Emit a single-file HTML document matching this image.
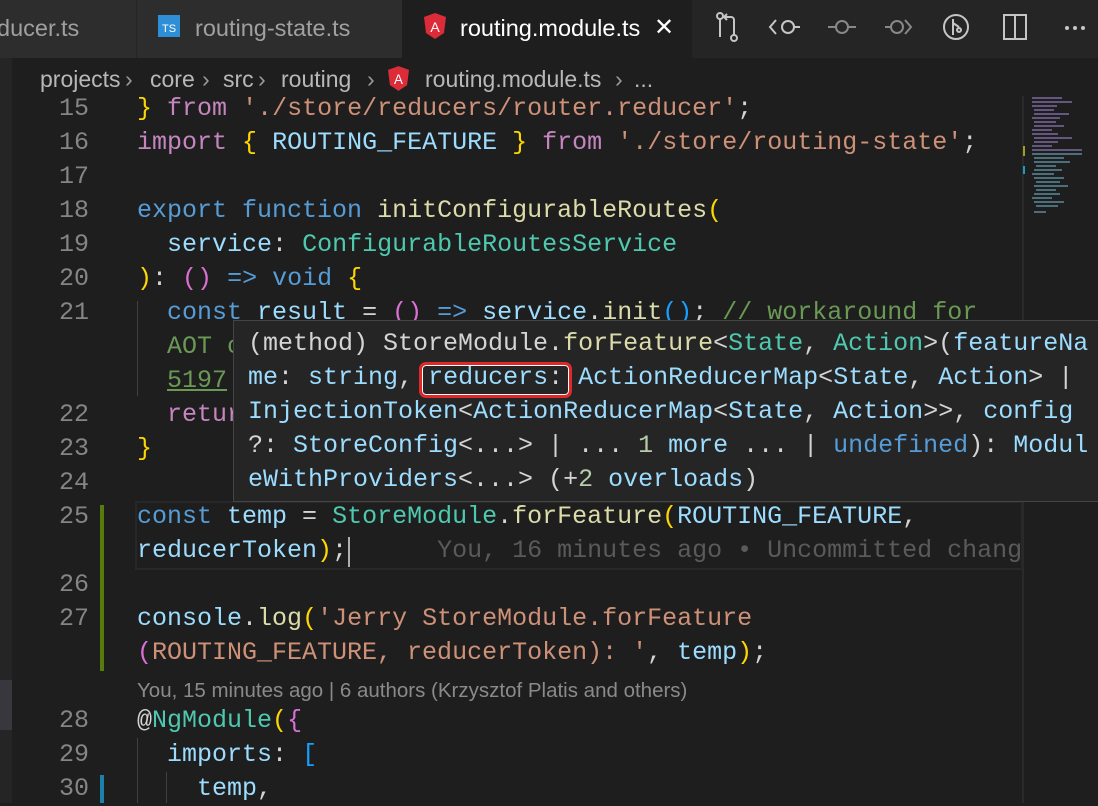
<!DOCTYPE html>
<html><head><meta charset="utf-8"><style>
*{margin:0;padding:0;box-sizing:border-box}
body{width:1098px;height:803px;overflow:hidden;background:#1e1e1e;position:relative;font-family:"Liberation Sans",sans-serif}
.abs{position:absolute}
.tabs{left:0;top:0;width:1098px;height:58px;background:#252526}
.tab{position:absolute;top:0;height:58px;color:#a0a0a0;font-size:23.5px;line-height:56px;white-space:nowrap;overflow:hidden}
.cr{position:absolute;top:62px;font-size:23px;color:#b8b8b8;line-height:34px;white-space:nowrap}
.sep{position:absolute;top:62px;font-size:23px;color:#999;line-height:34px}
.code{font-family:"Liberation Mono",monospace;font-size:25px;line-height:34px;white-space:pre;color:#d4d4d4;position:absolute}
.ln{position:absolute;left:20px;width:69px;text-align:right;font-family:"Liberation Mono",monospace;font-size:25px;line-height:34px;color:#858585}
.k{color:#569cd6}.c{color:#c586c0}.f{color:#dcdcaa}.t{color:#4ec9b0}.v{color:#9cdcfe}.s{color:#ce9178}.g{color:#6a9955}.n{color:#b5cea8}
.y{color:#ffd700}.p{color:#da70d6}.b{color:#179fff}.w{color:#d4d4d4}
</style></head><body>
<div class="abs" style="left:0;top:58px;width:12px;height:745px;background:#252526"></div>
<div class="abs" style="left:0;top:680px;width:12px;height:50px;background:#37373d"></div>
<div class="abs tabs">
 <div class="tab" style="left:0;width:136px;background:#2d2d2d"><span style="margin-left:-3px">ducer.ts</span></div>
 <div class="tab" style="left:137px;width:265px;background:#2d2d2d">
  <span class="abs" style="left:21px;top:15px;width:22px;height:22px;background:#2f8fd6;color:#fff;font-size:11px;line-height:28px;text-align:center">TS</span>
  <span class="abs" style="left:58px;top:0">routing-state.ts</span></div>
 <div class="tab" style="left:402px;width:290px;background:#1e1e1e;color:#fff">
  <svg class="abs" style="left:22px;top:13px" width="22" height="26" viewBox="0 0 22 26"><path d="M11 0L22 4 20 20 11 26 2 20 0 4Z" fill="#dd2c39"/><text x="11" y="19" font-size="14" fill="#fff" text-anchor="middle" font-family="Liberation Sans">A</text></svg>
  <span class="abs" style="left:58px;top:0">routing.module.ts</span>
  <span class="abs" style="left:252px;top:0;font-size:24px">✕</span></div>
 <svg class="abs" style="left:700px;top:8px" width="398" height="40" viewBox="0 0 398 40" fill="none" stroke="#c5c5c5" stroke-width="2">
  <circle cx="20" cy="8" r="3"/><circle cx="34" cy="30" r="3"/><path d="M20 11v18M34 27V12a3 3 0 0 0-3-3h-6M27 6l-3 3 3 3"/>
  <path d="M76 12l-6 7 6 7"/><circle cx="88" cy="19" r="6"/><path d="M94 19h6"/>
  <g stroke="#888"><circle cx="142" cy="19" r="6"/><path d="M128 19h8M148 19h8"/></g>
  <g stroke="#888"><path d="M185 19h6"/><circle cx="197" cy="19" r="6"/><path d="M205 12l6 7-6 7"/></g>
  <circle cx="256" cy="19" r="12"/><path d="M253 11v16M253 15l6 4"/><circle cx="259" cy="22" r="2"/>
  <rect x="304" y="7" width="22" height="24"/><path d="M315 7v24"/>
  <g fill="#c5c5c5" stroke="none"><circle cx="367" cy="20" r="2"/><circle cx="375" cy="20" r="2"/><circle cx="383" cy="20" r="2"/></g>
 </svg>
</div>
<div class="cr" style="left:40px">projects</div><div class="sep" style="left:125px">›</div>
<div class="cr" style="left:150px">core</div><div class="sep" style="left:202px">›</div>
<div class="cr" style="left:223px">src</div><div class="sep" style="left:258px">›</div>
<div class="cr" style="left:281px">routing</div><div class="sep" style="left:367px">›</div>
<svg class="abs" style="left:388px;top:66px" width="21" height="25" viewBox="0 0 22 26"><path d="M11 0L22 4 20 20 11 26 2 20 0 4Z" fill="#dd2c39"/><text x="11" y="19" font-size="14" fill="#fff" text-anchor="middle">A</text></svg>
<div class="cr" style="left:425px">routing.module.ts</div><div class="sep" style="left:615px">›</div>
<div class="cr" style="left:634px">...</div>

<div class="abs" style="left:1022px;top:96px;width:2px;height:707px;background:#2a2a2a"></div>
<svg class="abs" style="left:1030px;top:96px" width="60" height="130">
 <g stroke-width="1.5">
 <path d="M2 2h30M2 6h40M2 10h25M4 14h20M4 18h35M2 22h28M4 26h22M4 30h30M2 34h20M2 38h26M4 42h38M4 46h24M2 50h20M2 54h50" stroke="#7a6aa0"/>
 <path d="M2 58h50M4 62h30M4 66h36M6 70h20M4 74h28M2 78h22M4 82h30M6 86h24M4 90h34M6 94h20M4 98h26M2 102h20M4 106h30M6 110h22M4 116h12" stroke="#5a8a9a"/>
 </g></svg>
<div class="abs" style="left:1023px;top:146px;width:2px;height:10px;background:#a0a020"></div>
<div class="abs" style="left:1023px;top:166px;width:2px;height:8px;background:#1a9bbf"></div>

<div class="abs" style="left:100px;top:505px;width:4px;height:166px;background:#587c0c"></div>
<div class="abs" style="left:100px;top:775px;width:4px;height:28px;background:#1b81a8"></div>
<div class="abs" style="left:135px;top:501px;width:888px;height:69px;border:2px solid #282828"></div>
<div class="abs" style="left:137px;top:301px;width:1px;height:95px;background:#404040"></div>
<div class="abs" style="left:137px;top:738px;width:1px;height:65px;background:#404040"></div>
<div class="abs" style="left:166px;top:772px;width:1px;height:31px;background:#404040"></div>
<div class="abs" style="left:348px;top:537px;width:2px;height:30px;background:#aeafad"></div>

<div class="ln" style="top:92px">15</div><div class="ln" style="top:126px">16</div><div class="ln" style="top:160px">17</div><div class="ln" style="top:194px">18</div><div class="ln" style="top:228px">19</div><div class="ln" style="top:262px">20</div><div class="ln" style="top:296px">21</div><div class="ln" style="top:398px">22</div><div class="ln" style="top:432px">23</div><div class="ln" style="top:466px">24</div><div class="ln" style="top:500px">25</div><div class="ln" style="top:568px">26</div><div class="ln" style="top:602px">27</div><div class="ln" style="top:704px">28</div><div class="ln" style="top:738px">29</div><div class="ln" style="top:772px">30</div>

<div class="code" style="left:137px;top:92px"><span class="y">}</span> <span class="c">from</span> <span class="s">'./store/reducers/router.reducer'</span>;
<span class="c">import</span> <span class="y">{</span> <span class="v">ROUTING_FEATURE</span> <span class="y">}</span> <span class="c">from</span> <span class="s">'./store/routing-state'</span>;

<span class="k">export</span> <span class="k">function</span> <span class="f">initConfigurableRoutes</span><span class="y">(</span>
  <span class="v">service</span>: <span class="t">ConfigurableRoutesService</span>
<span class="y">)</span>: <span class="p">()</span> <span class="k">=&gt;</span> <span class="k">void</span> <span class="y">{</span>
  <span class="k">const</span> <span class="v">result</span> = <span class="p">()</span> <span class="k">=&gt;</span> <span class="v">service</span>.<span class="f">init</span><span class="b">()</span>; <span class="g">// workaround for</span>
  <span class="g">AOT c</span>
  <span class="g" style="text-decoration:underline">5197</span>
  <span class="c">retur</span>
<span class="y">}</span>

<span class="k">const</span> <span class="v">temp</span> = <span class="t">StoreModule</span>.<span class="f">forFeature</span><span class="y">(</span><span class="v">ROUTING_FEATURE</span>,
<span class="v">reducerToken</span><span class="y">)</span>;      <span style="color:#5a5a5a">You, 16 minutes ago • Uncommitted chang</span>

<span class="v">console</span>.<span class="f">log</span><span class="y">(</span><span class="s">'Jerry StoreModule.forFeature</span>
<span class="p">(</span><span class="s">ROUTING_FEATURE, reducerToken): '</span>, <span class="v">temp</span><span class="y">)</span>;
</div>
<div class="abs" style="left:137px;top:674px;font-size:20.5px;line-height:34px;color:#8a8a8a;white-space:nowrap">You, 15 minutes ago | 6 authors (Krzysztof Platis and others)</div>
<div class="code" style="left:137px;top:704px">@<span class="t">NgModule</span><span class="y">(</span><span class="p">{</span>
  <span class="v">imports</span>: <span class="b">[</span>
    <span class="v">temp</span>,</div>

<div class="abs" style="left:233px;top:320px;width:870px;height:182px;background:#252526;border:1px solid #454545"></div>
<div class="code v" style="left:248px;top:327px"><span class="w">(method) StoreModule.</span><span class="f">forFeature</span><span class="w">&lt;</span><span class="t">State</span><span class="w">,</span> <span class="t">Action</span><span class="w">&gt;(</span>featureNa
me<span class="w">:</span> string<span class="w">,</span> reducers<span class="w">:</span> ActionReducerMap<span class="w">&lt;</span>State<span class="w">,</span> Action<span class="w">&gt; |</span>
InjectionToken<span class="w">&lt;</span>ActionReducerMap<span class="w">&lt;</span>State<span class="w">,</span> Action<span class="w">&gt;&gt;,</span> config
<span class="w">?:</span> StoreConfig<span class="w">&lt;...&gt; | ...</span> <span class="n">1</span> more <span class="w">... |</span> <span class="k">undefined</span><span class="w">):</span> Modul
eWithProviders<span class="w">&lt;...&gt; (+</span><span class="n">2</span> overloads<span class="w">)</span></div>
<div class="abs" style="left:419px;top:362px;width:153px;height:36px;border:3px solid #e02828;border-radius:7px;box-shadow:inset 0 0 0 1px #fff"></div>
</body></html>
